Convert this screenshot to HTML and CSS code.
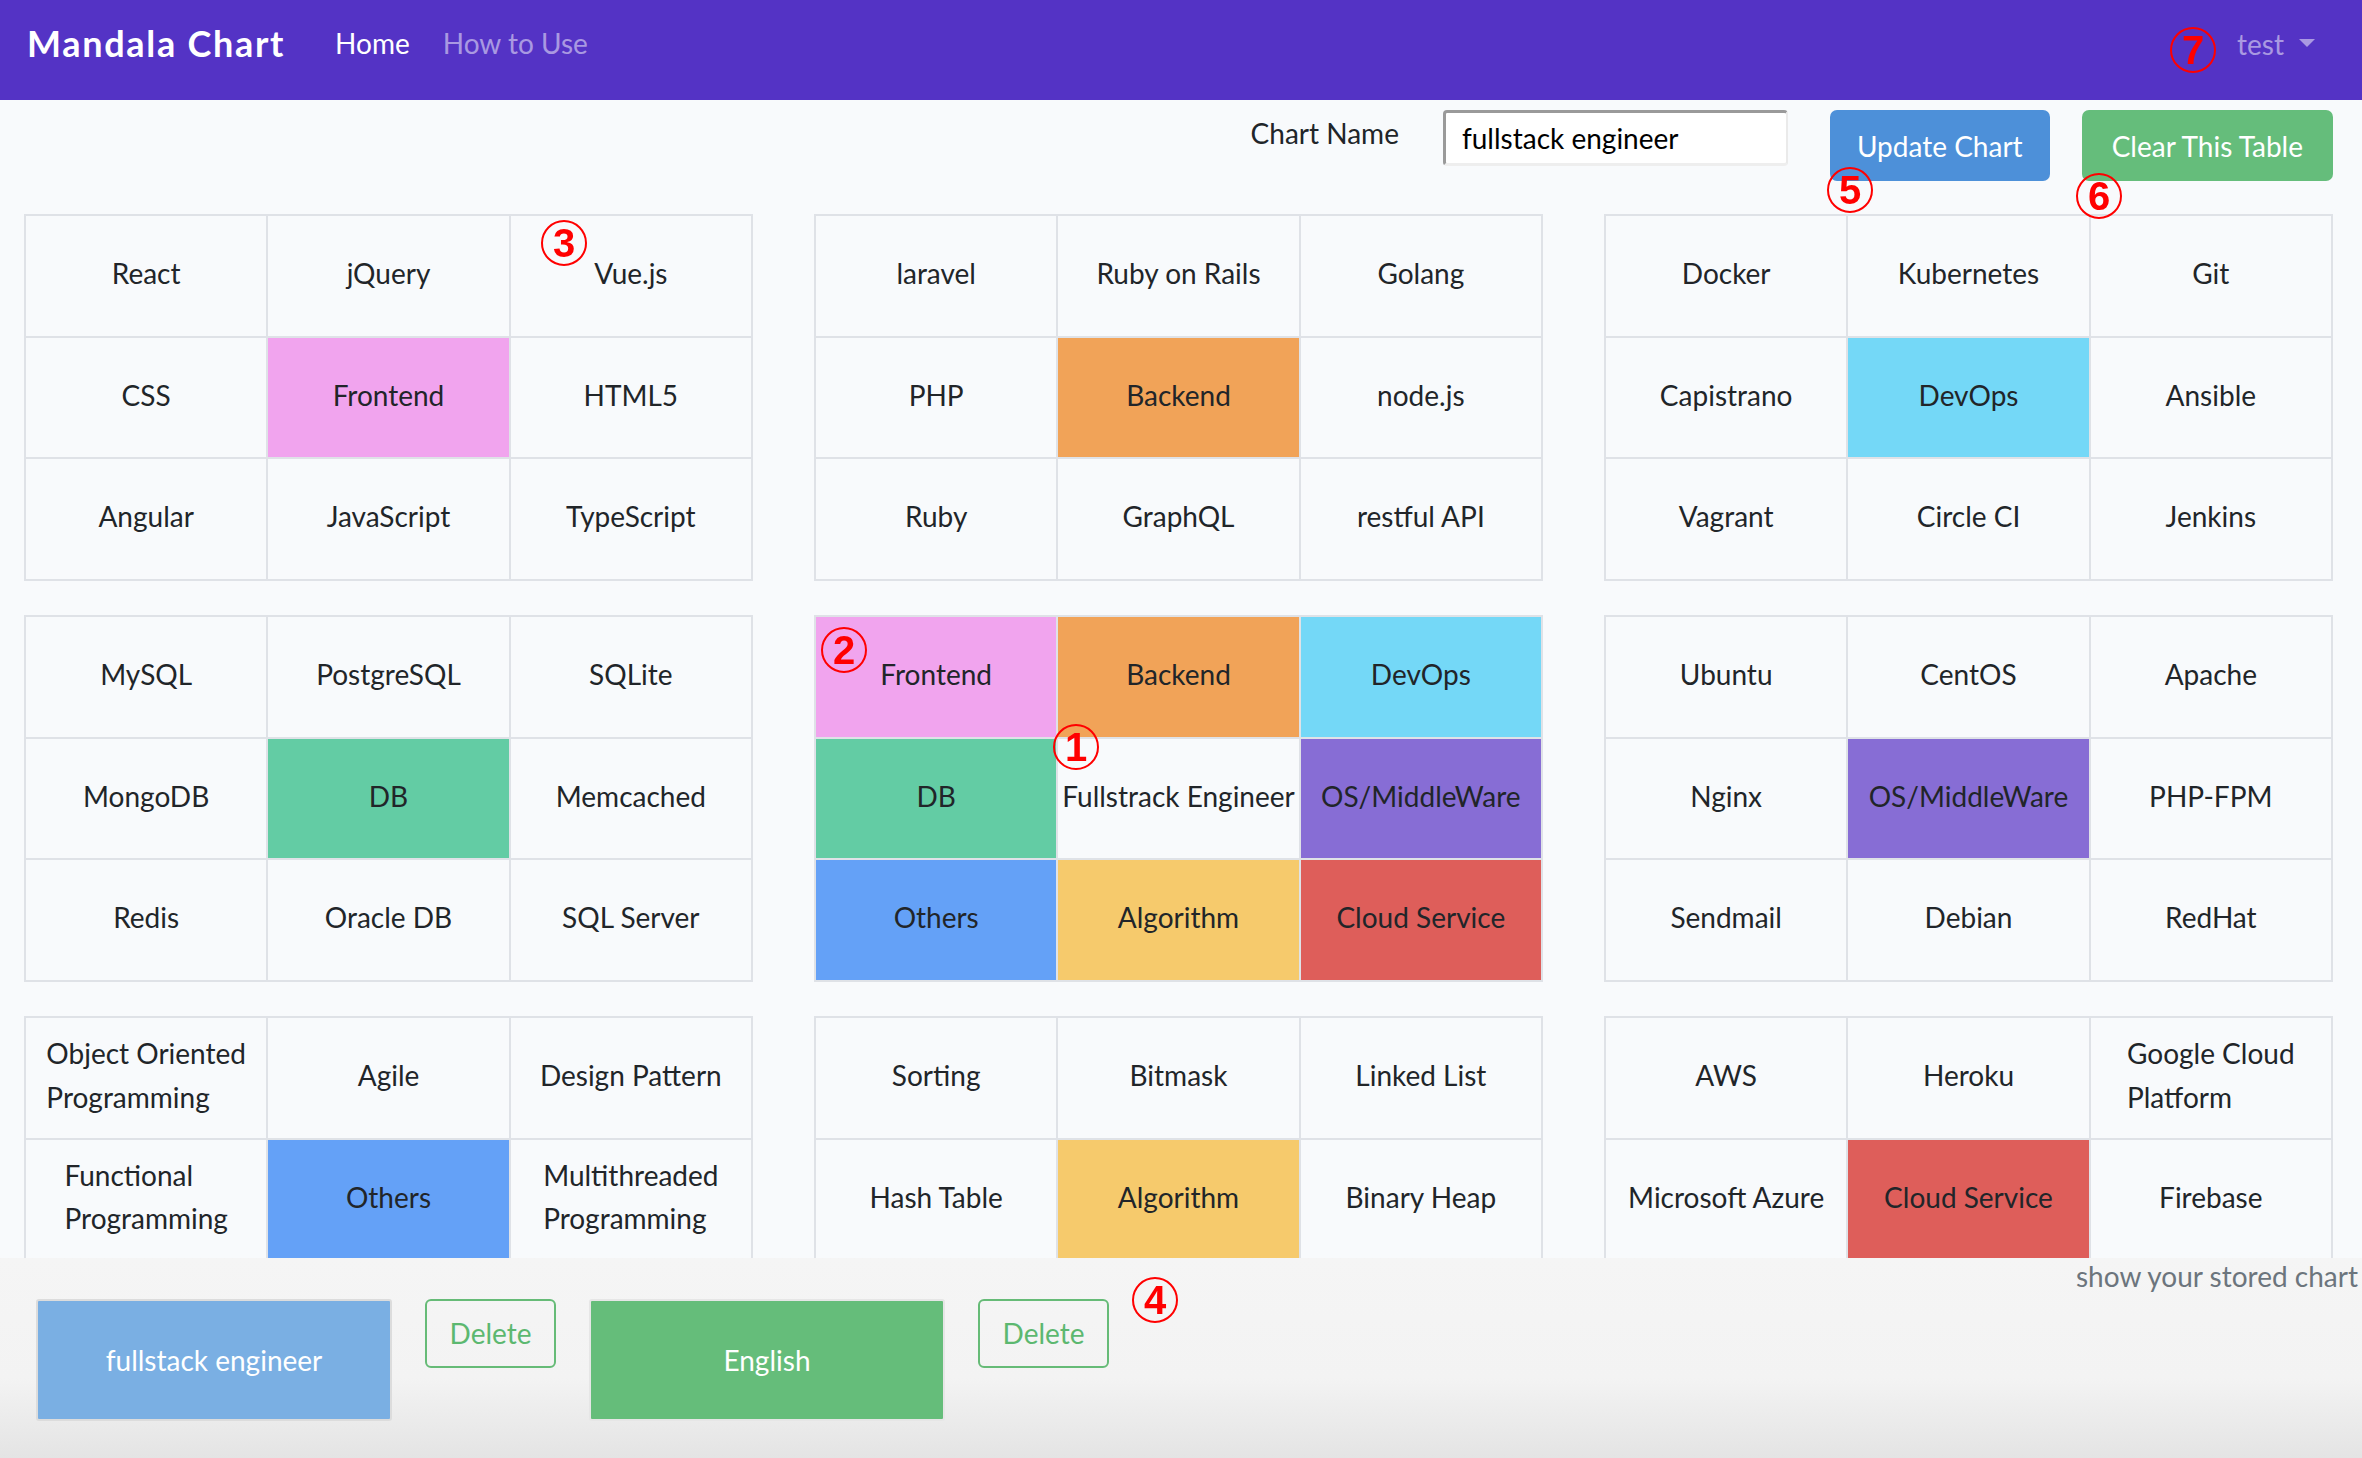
FILE: index.html
```html
<!DOCTYPE html>
<html lang="en">
<head>
<meta charset="utf-8">
<title>Mandala Chart</title>
<link rel="stylesheet" href="styles.css">
</head>
<body>
<nav class="navbar">
  <a class="brand" href="#">Mandala Chart</a>
  <ul class="nav-links">
    <li class="nav-item active">Home</li>
    <li class="nav-item">How to Use</li>
  </ul>
  <div class="user">test<span class="caret"></span></div>
</nav>

<main class="page">
  <form class="toolbar">
    <label class="toolbar-label">Chart Name</label>
    <input class="toolbar-input" type="text" value="fullstack engineer">
    <button type="button" class="btn btn-blue">Update Chart</button>
    <button type="button" class="btn btn-green">Clear This Table</button>
  </form>

  <section class="mandala">
    <div class="block">
      <div class="cell">React</div><div class="cell">jQuery</div><div class="cell">Vue.js</div>
      <div class="cell">CSS</div><div class="cell c-front">Frontend</div><div class="cell">HTML5</div>
      <div class="cell">Angular</div><div class="cell">JavaScript</div><div class="cell">TypeScript</div>
    </div>
    <div class="block">
      <div class="cell">laravel</div><div class="cell">Ruby on Rails</div><div class="cell">Golang</div>
      <div class="cell">PHP</div><div class="cell c-back">Backend</div><div class="cell">node.js</div>
      <div class="cell">Ruby</div><div class="cell">GraphQL</div><div class="cell">restful API</div>
    </div>
    <div class="block">
      <div class="cell">Docker</div><div class="cell">Kubernetes</div><div class="cell">Git</div>
      <div class="cell">Capistrano</div><div class="cell c-devops">DevOps</div><div class="cell">Ansible</div>
      <div class="cell">Vagrant</div><div class="cell">Circle CI</div><div class="cell">Jenkins</div>
    </div>
    <div class="block">
      <div class="cell">MySQL</div><div class="cell">PostgreSQL</div><div class="cell">SQLite</div>
      <div class="cell">MongoDB</div><div class="cell c-db">DB</div><div class="cell">Memcached</div>
      <div class="cell">Redis</div><div class="cell">Oracle DB</div><div class="cell">SQL Server</div>
    </div>
    <div class="block">
      <div class="cell c-front">Frontend</div><div class="cell c-back">Backend</div><div class="cell c-devops">DevOps</div>
      <div class="cell c-db">DB</div><div class="cell c-center">Fullstrack Engineer</div><div class="cell c-os">OS/MiddleWare</div>
      <div class="cell c-others">Others</div><div class="cell c-algo">Algorithm</div><div class="cell c-cloud">Cloud Service</div>
    </div>
    <div class="block">
      <div class="cell">Ubuntu</div><div class="cell">CentOS</div><div class="cell">Apache</div>
      <div class="cell">Nginx</div><div class="cell c-os">OS/MiddleWare</div><div class="cell">PHP-FPM</div>
      <div class="cell">Sendmail</div><div class="cell">Debian</div><div class="cell">RedHat</div>
    </div>
    <div class="block">
      <div class="cell"><span>Object Oriented<br>Programming</span></div><div class="cell">Agile</div><div class="cell">Design Pattern</div>
      <div class="cell"><span>Functional<br>Programming</span></div><div class="cell c-others">Others</div><div class="cell"><span>Multithreaded<br>Programming</span></div>
      <div class="cell"></div><div class="cell"></div><div class="cell"></div>
    </div>
    <div class="block">
      <div class="cell">Sorting</div><div class="cell">Bitmask</div><div class="cell">Linked List</div>
      <div class="cell">Hash Table</div><div class="cell c-algo">Algorithm</div><div class="cell">Binary Heap</div>
      <div class="cell"></div><div class="cell"></div><div class="cell"></div>
    </div>
    <div class="block">
      <div class="cell">AWS</div><div class="cell">Heroku</div><div class="cell"><span>Google Cloud<br>Platform</span></div>
      <div class="cell">Microsoft Azure</div><div class="cell c-cloud">Cloud Service</div><div class="cell">Firebase</div>
      <div class="cell"></div><div class="cell"></div><div class="cell"></div>
    </div>
  </section>
</main>

<footer class="stored">
  <div class="stored-list">
    <button type="button" class="chart-btn chart-blue">fullstack engineer</button>
    <button type="button" class="btn-delete">Delete</button>
    <button type="button" class="chart-btn chart-green">English</button>
    <button type="button" class="btn-delete">Delete</button>
  </div>
  <p class="stored-hint">show your stored chart</p>
</footer>

<div class="marks">
  <span class="mark m1">1</span>
  <span class="mark m2">2</span>
  <span class="mark m3">3</span>
  <span class="mark m4">4</span>
  <span class="mark m5">5</span>
  <span class="mark m6">6</span>
  <span class="mark m7">7</span>
</div>
</body>
</html>
```
FILE: styles.css
```css
* { box-sizing: border-box; }

html, body {
  margin: 0;
  padding: 0;
  height: 100%;
  overflow: hidden;
}

body {
  background: #f8fafc;
  color: #212529;
  font-family: "Lato", "Noto Sans", sans-serif;
  font-size: 28px;
  position: relative;
}

/* ---------- navbar ---------- */
.navbar {
  height: 100px;
  background: #5433c5;
  display: flex;
  align-items: flex-start;
  padding: 22px 47px 0 27px;
}

.brand {
  color: #fff;
  text-decoration: none;
  font-size: 36px;
  font-weight: 700;
  letter-spacing: 1.7px;
  line-height: 1.2;
  margin-right: 50px;
}

.nav-links {
  list-style: none;
  margin: 5px 0 0;
  padding: 0;
  display: flex;
  gap: 33px;
  line-height: 1.2;
}

.nav-item { color: rgba(255, 255, 255, 0.5); }
.nav-item.active { color: #fff; }

.user {
  margin: 6px 0 0 auto;
  color: rgba(255, 255, 255, 0.5);
  line-height: 1.2;
  display: flex;
  align-items: center;
}

.caret {
  width: 0;
  height: 0;
  margin-left: 15px;
  margin-top: -4px;
  border-left: 8px solid transparent;
  border-right: 8px solid transparent;
  border-top: 8px solid rgba(255, 255, 255, 0.5);
}

/* ---------- toolbar ---------- */
.toolbar {
  display: flex;
  justify-content: flex-end;
  align-items: flex-start;
  margin: 10px 0 0;
  padding: 0 29px 0 0;
}

.toolbar-label {
  line-height: 46px;
  margin-right: 44px;
}

.toolbar-input {
  width: 345px;
  height: 56px;
  font: inherit;
  color: #000;
  background: #fff;
  padding: 0 16px;
  border-style: solid;
  border-width: 3px 2px 3px 3px;
  border-color: #9a9a9a #eaeaea #eeeeee #9a9a9a;
  border-radius: 4px;
  margin-right: 42px;
}

.btn {
  height: 71px;
  border: none;
  border-radius: 7px;
  color: #fff;
  font: inherit;
  padding: 0 27px;
}

.btn-blue { background: #4d90d9; margin-right: 32px; }
.btn-green { background: #65bd7b; padding: 0 30px; }

/* ---------- mandala ---------- */
.mandala {
  display: grid;
  grid-template-columns: repeat(3, 729px);
  column-gap: 61px;
  row-gap: 34px;
  padding: 0 29px 0 24px;
  margin-top: 33px;
}

.block {
  height: 367px;
  display: grid;
  grid-template-columns: repeat(3, 1fr);
  grid-template-rows: repeat(3, 1fr);
  gap: 2px;
  padding: 2px;
  background: #dfe2e7;
}

.cell {
  background: #f8fafc;
  display: flex;
  align-items: center;
  justify-content: center;
  text-align: center;
  line-height: 1.55;
  padding: 0 6px 4px;
}

.cell span { text-align: left; }

.c-front  { background: #f1a4ee; }
.c-back   { background: #f1a358; }
.c-devops { background: #74d8f7; }
.c-db     { background: #63cca4; }
.c-center { background: #f8fafc; white-space: nowrap; padding: 0 0 4px; }
.c-os     { background: #876dd5; }
.c-others { background: #64a1f7; }
.c-algo   { background: #f6ca6c; }
.c-cloud  { background: #de5e5a; }

/* ---------- stored charts footer ---------- */
.stored {
  position: fixed;
  left: 0;
  right: 0;
  bottom: 0;
  height: 200px;
  background: linear-gradient(#f5f5f5 0%, #f3f3f3 60%, #e4e4e4 100%);
  display: flex;
  align-items: flex-start;
  overflow: hidden;
  z-index: 5;
}

.stored-list {
  display: flex;
  align-items: flex-start;
  gap: 33px;
  margin: 41px 0 0 36px;
}

.chart-btn {
  width: 356px;
  height: 122px;
  border: 2px solid #dcdcdc;
  border-radius: 3px;
  color: #fff;
  font: inherit;
}

.chart-blue { background: #7aafe3; }
.chart-green { background: #65bd7a; border-color: #e6e6e6; }

.btn-delete {
  width: 131px;
  height: 69px;
  background: transparent;
  border: 2px solid #66bb77;
  border-radius: 6px;
  color: #5cb870;
  font: inherit;
  padding-bottom: 3px;
}

.stored-hint {
  margin: 0 0 0 auto;
  width: 286px;
  flex-shrink: 0;
  white-space: nowrap;
  color: #6c757d;
  line-height: 1.2;
  padding-top: 2px;
}

/* ---------- annotation marks ---------- */
.marks {
  position: absolute;
  inset: 0;
  pointer-events: none;
  z-index: 10;
}

.mark {
  position: absolute;
  width: 46px;
  height: 46px;
  border: 2px solid #ff0000;
  border-radius: 50%;
  color: #ff0000;
  font-family: "Liberation Sans", sans-serif;
  font-weight: 700;
  font-size: 40px;
  line-height: 42px;
  text-align: center;
}

.m1 { left: 1053px; top: 724px; }
.m2 { left: 821px;  top: 627px; }
.m3 { left: 541px;  top: 220px; }
.m4 { left: 1132px; top: 1277px; }
.m5 { left: 1827px; top: 167px; }
.m6 { left: 2076px; top: 173px; }
.m7 { left: 2170px; top: 27px; }
```
